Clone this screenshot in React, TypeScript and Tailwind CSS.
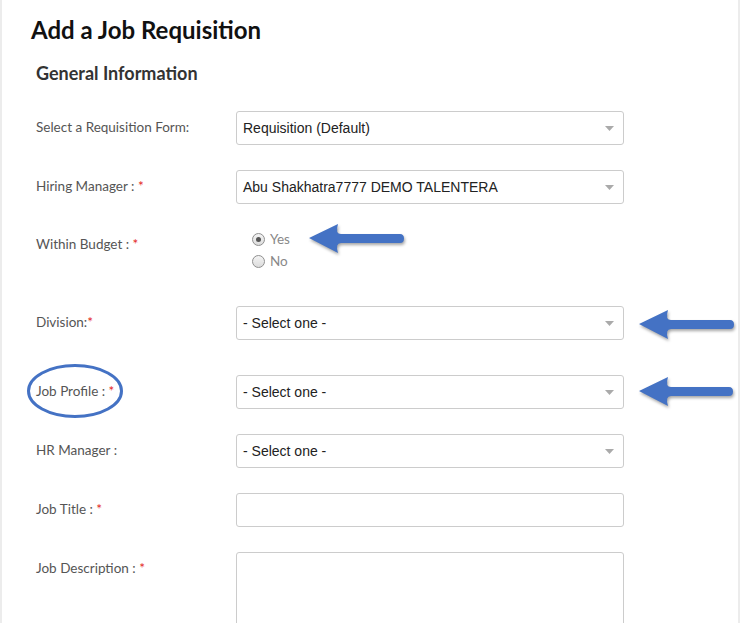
import React from "react";

const labelFont = { fontFamily: "Lato, 'Open Sans', sans-serif" };

function Caret() {
  return (
    <svg width="9" height="5" viewBox="0 0 9 5" className="shrink-0">
      <path d="M0 0 L9 0 L4.5 5 Z" fill="#aaaaaa" />
    </svg>
  );
}

function SelectBox({ value }: { value: string }) {
  return (
    <div className="flex h-[34px] w-[388px] items-center justify-between rounded-[3px] border border-[#cccccc] bg-white pl-[6px] pr-[9px]">
      <span className="text-[14px] text-[#222]" style={{ fontFamily: "'Liberation Sans', Arial, sans-serif" }}>
        {value}
      </span>
      <Caret />
    </div>
  );
}

function Label({ text, req, colon }: { text: string; req?: boolean; colon?: string }) {
  return (
    <div className="w-[200px] shrink-0 pt-[7px] text-[13.5px] leading-[18px] text-[#555]" style={labelFont}>
      {text}
      {colon}
      {req && <span className="text-[#e31b1b]">*</span>}
    </div>
  );
}

function Radio({ checked, label }: { checked?: boolean; label: string }) {
  return (
    <div className="flex h-[22px] items-center">
      <span className="flex h-[13px] w-[13px] items-center justify-center rounded-full border border-[#8f8f8f] bg-gradient-to-b from-[#f4f4f4] to-[#dcdcdc]">
        {checked && <span className="h-[5px] w-[5px] rounded-full bg-[#555]" />}
      </span>
      <span className="ml-[5px] text-[13.5px] text-[#888]" style={labelFont}>
        {label}
      </span>
    </div>
  );
}

function Arrow({ className, length }: { className: string; length: number }) {
  return (
    <svg
      width={length + 4}
      height="34"
      viewBox={`0 0 ${length + 4} 34`}
      className={className}
      style={{ filter: "drop-shadow(1px 2px 1.5px rgba(0,0,0,0.35))" }}
    >
      <path
        d={`M1 16 L30 2 Q27 12 33 12 L${length - 4} 12 Q${length} 12 ${length} 16.5 Q${length} 21 ${length - 4} 21 L33 21 Q27 21 30 31 Z`}
        fill="#4472C4"
      />
    </svg>
  );
}

export default function App() {
  return (
    <div className="relative h-[623px] w-[741px] overflow-hidden bg-white">
      <div className="h-full w-[740px] border-l-2 border-r-2 border-[#ececec] bg-white">
        <h1
          className="pl-[29px] pt-[15px] text-[24px] font-bold leading-[30px] text-[#111]"
          style={labelFont}
        >
          Add a Job Requisition
        </h1>
        <h2
          className="mt-[16px] pl-[34px] text-[18px] font-bold leading-[24px] text-[#333]"
          style={labelFont}
        >
          General Information
        </h2>

        <div className="mt-[26px] flex flex-col pl-[34px]">
          <div className="flex">
            <Label text="Select a Requisition Form:" />
            <SelectBox value="Requisition (Default)" />
          </div>
          <div className="mt-[25px] flex">
            <Label text="Hiring Manager" colon=" : " req />
            <SelectBox value="Abu Shakhatra7777 DEMO TALENTERA" />
          </div>
          <div className="mt-[24px] flex h-[53px]">
            <div className="w-[200px] shrink-0 pt-[7px] text-[13.5px] leading-[18px] text-[#555]" style={labelFont}>
              Within Budget : <span className="text-[#e31b1b]">*</span>
            </div>
            <div className="flex flex-col pl-[16px]">
              <Radio checked label="Yes" />
              <Radio label="No" />
            </div>
          </div>
          <div className="mt-[25px] flex">
            <Label text="Division:" req />
            <SelectBox value="- Select one -" />
          </div>
          <div className="mt-[35px] flex">
            <Label text="Job Profile" colon=" : " req />
            <SelectBox value="- Select one -" />
          </div>
          <div className="mt-[25px] flex">
            <Label text="HR Manager" colon=" :" />
            <SelectBox value="- Select one -" />
          </div>
          <div className="mt-[25px] flex">
            <Label text="Job Title" colon=" : " req />
            <div className="h-[34px] w-[388px] rounded-[3px] border border-[#cccccc] bg-white" />
          </div>
          <div className="mt-[25px] flex">
            <Label text="Job Description" colon=" : " req />
            <div className="h-[120px] w-[388px] rounded-[3px] border border-[#cccccc] bg-white" />
          </div>
        </div>
      </div>

      {/* annotations */}
      <Arrow className="absolute left-[308px] top-[222px]" length={96} />
      <Arrow className="absolute left-[638px] top-[308px]" length={96} />
      <Arrow className="absolute left-[638px] top-[375px]" length={95} />
      <svg width="100" height="60" className="pointer-events-none absolute left-[26px] top-[362px]">
        <ellipse cx="49" cy="29" rx="46.5" ry="25.5" fill="none" stroke="#4472C4" strokeWidth="3" />
      </svg>
    </div>
  );
}
